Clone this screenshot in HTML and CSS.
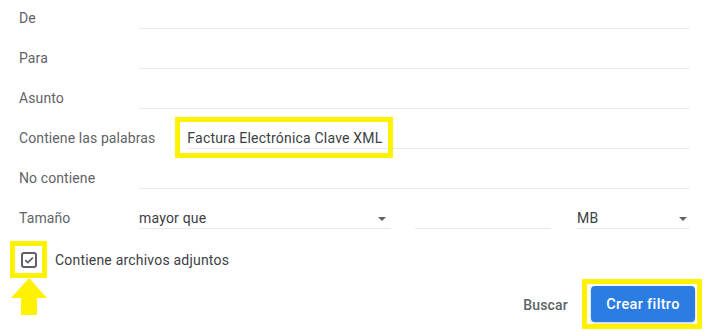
FILE: index.html
```html
<!DOCTYPE html>
<html lang="es">
<head>
<meta charset="utf-8">
<link rel="stylesheet" href="styles.css">
</head>
<body>
<div class="form">
  <div class="row"><span class="label">De</span><div class="field"></div></div>
  <div class="row"><span class="label">Para</span><div class="field"></div></div>
  <div class="row"><span class="label">Asunto</span><div class="field"></div></div>
  <div class="row"><span class="label">Contiene las palabras</span><div class="field value">Factura Electrónica Clave XML</div></div>
  <div class="row"><span class="label">No contiene</span><div class="field"></div></div>
  <div class="row"><span class="label">Tamaño</span>
    <div class="field value select sel-size">mayor que<span class="caret"></span></div>
    <div class="field num"></div>
    <div class="field value select sel-unit">MB<span class="caret"></span></div>
  </div>
  <div class="check-row">
    <svg class="checkbox" width="18" height="18" viewBox="0 0 18 18"><rect x="2" y="2" width="14" height="14" rx="2" fill="none" stroke="#5f6368" stroke-width="2"/><path d="M5.3 9.2 L7.8 11.6 L12.8 6.6" fill="none" stroke="#5f6368" stroke-width="1.8"/></svg>
    <span class="check-label">Contiene archivos adjuntos</span>
  </div>
  <div class="actions">
    <span class="link">Buscar</span>
    <span class="btn">Crear filtro</span>
  </div>
</div>
<div class="hl hl-words"></div>
<div class="hl hl-check"></div>
<div class="hl hl-btn"></div>
<svg class="arrow" width="36" height="38" viewBox="0 0 36 38"><polygon points="18,0 36,20 26,20 26,37 10,37 10,20 0,20" fill="#fff200"/></svg>
</body>
</html>
```
FILE: styles.css
```css
html, body {
  margin: 0;
  padding: 0;
  background: #fff;
}
body {
  width: 708px;
  height: 332px;
  overflow: hidden;
  position: relative;
  font-family: Roboto, "Liberation Sans", sans-serif;
  font-size: 14px;
  letter-spacing: 0.2px;
  color: #5f6368;
}
.form {
  padding: 0 18px 0 19px;
}
.row {
  display: flex;
  align-items: flex-start;
  height: 40px;
}
.label {
  flex: 0 0 auto;
  min-width: 88px;
  padding-right: 32px;
  padding-top: 9px;
  line-height: 19px;
  white-space: nowrap;
  letter-spacing: 0.1px;
}
.field {
  flex: 1 1 auto;
  height: 28px;
  border-bottom: 1px solid #e8eaed;
  box-sizing: content-box;
  padding-top: 0;
}
.value {
  color: #3c4043;
  padding-top: 9px;
  height: 19px;
  line-height: 19px;
  white-space: nowrap;
}
.select {
  position: relative;
}
.sel-size {
  flex: 0 0 252px;
}
.num {
  flex: 0 0 136px;
  margin-left: 24px;
}
.sel-unit {
  flex: 1 1 auto;
  margin-left: 26px;
}
.caret {
  position: absolute;
  right: 5px;
  top: 17px;
  width: 0;
  height: 0;
  border-left: 4.5px solid transparent;
  border-right: 4.5px solid transparent;
  border-top: 4.5px solid #5f6368;
}
.sel-unit .caret {
  right: 3px;
}
.check-row {
  display: flex;
  align-items: center;
  height: 40px;
  padding-left: 1px;
}
.checkbox {
  display: block;
  margin-right: 17px;
}
.check-label {
  color: #3c4043;
}
.actions {
  display: flex;
  justify-content: flex-end;
  align-items: center;
  margin-top: 6px;
  margin-right: -5px;
}
.link {
  font-weight: 500;
  color: #5f6368;
  margin-right: 23px;
  margin-top: 2px;
}
.btn {
  display: flex;
  align-items: center;
  justify-content: center;
  width: 104px;
  height: 36px;
  background: #2b7de4;
  color: #fff;
  font-weight: 500;
  font-size: 14.5px;
  letter-spacing: 0.35px;
  border-radius: 4px;
  box-shadow: 0 1px 3px rgba(60, 64, 67, 0.3);
}
.hl {
  position: absolute;
  border: 5px solid #fff200;
  box-sizing: border-box;
}
.hl-words {
  left: 175px;
  top: 117px;
  width: 218px;
  height: 41px;
}
.hl-check {
  left: 10px;
  top: 241px;
  width: 37px;
  height: 37px;
}
.hl-btn {
  left: 582px;
  top: 279px;
  width: 120px;
  height: 50px;
}
.arrow {
  position: absolute;
  left: 11px;
  top: 278px;
}
```
